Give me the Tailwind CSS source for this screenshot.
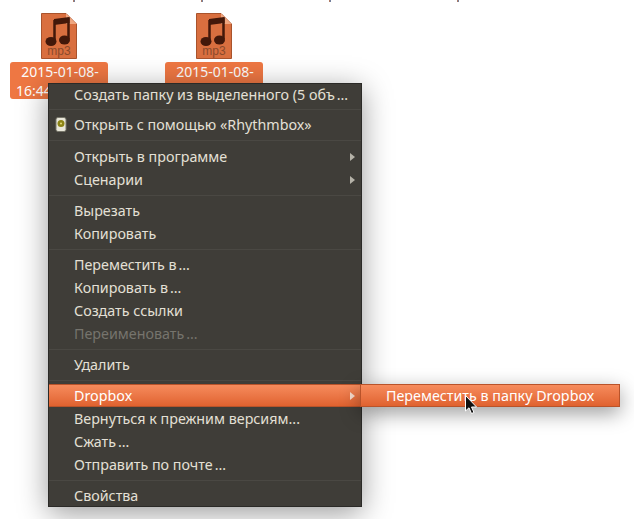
<!DOCTYPE html>
<html lang="en">

<head>
    <meta charset="UTF-8">
    <title>Dropbox menu</title>
    <script src="https://cdn.jsdelivr.net/npm/@tailwindcss/browser@4"></script>
</head>

<body class="font-['Noto_Sans',sans-serif] bg-white overflow-hidden">

    <main class="relative w-[634px] h-[519px] overflow-hidden">

        <!-- bits of the line above the icons -->
        <div class="absolute left-[73px] top-0 w-[2px] h-[2px] bg-gradient-to-r from-[#c9743f] to-[#4f7fb5]"></div>
        <div class="absolute left-[201px] top-0 w-[2px] h-[2px] bg-gradient-to-r from-[#c9743f] to-[#4f7fb5]"></div>
        <div class="absolute left-[329px] top-0 w-[2px] h-[2px] bg-gradient-to-r from-[#c9743f] to-[#4f7fb5]"></div>
        <div class="absolute left-[457px] top-0 w-[2px] h-[2px] bg-gradient-to-r from-[#c9743f] to-[#4f7fb5]"></div>

        <!-- desktop icons -->
        <div class="absolute left-[10px] top-[13px] w-[98px] flex flex-col items-center">
            <svg width="36" height="46" viewBox="0 0 36 46">
                <path d="M.5.5H25L35.500 11V45.500H.5Z" fill="#d96f3f" stroke="#a9532c"/>
                <path d="M25 .5V11H35.500Z" fill="#efa67f"/>
                <path d="M13.500 28V8L27.500 6V26" fill="none" stroke="#43180a" stroke-width="2.500"/>
                <path d="M13 6L28.500 4V10L13 12Z" fill="#43180a"/>
                <ellipse cx="10" cy="28.500" rx="5.500" ry="4.500" fill="#43180a"/>
                <ellipse cx="23.500" cy="27" rx="5.500" ry="4.500" fill="#43180a"/>
                <text x="18" y="42" text-anchor="middle" font-size="12" fill="#8a4a2c" font-family="Liberation Sans">mp3</text>
            </svg>
            <div class="mt-[3px] w-[98px] bg-[#ee7743] rounded-[3px] text-white text-[14px] leading-[19px] text-center h-[37px] pl-[2px]">2015-01-08-<br><span class="block text-left pl-[4px]">16:44</span></div>
        </div>
        <div class="absolute left-[165px] top-[13px] w-[98px] flex flex-col items-center">
            <svg width="36" height="46" viewBox="0 0 36 46">
                <path d="M.5.5H25L35.500 11V45.500H.5Z" fill="#d96f3f" stroke="#a9532c"/>
                <path d="M25 .5V11H35.500Z" fill="#efa67f"/>
                <path d="M13.500 28V8L27.500 6V26" fill="none" stroke="#43180a" stroke-width="2.500"/>
                <path d="M13 6L28.500 4V10L13 12Z" fill="#43180a"/>
                <ellipse cx="10" cy="28.500" rx="5.500" ry="4.500" fill="#43180a"/>
                <ellipse cx="23.500" cy="27" rx="5.500" ry="4.500" fill="#43180a"/>
                <text x="18" y="42" text-anchor="middle" font-size="12" fill="#8a4a2c" font-family="Liberation Sans">mp3</text>
            </svg>
            <div class="mt-[3px] w-[98px] bg-[#ee7743] rounded-[3px] text-white text-[14px] leading-[19px] text-center h-[37px] pl-[2px]">2015-01-08-</div>
        </div>

        <!-- context menu -->
        <div class="absolute left-[48px] top-[83px] w-[314px] h-[424px] bg-[#3f3d38] border border-[#2b2a27] shadow-[0_6px_28px_rgba(0,0,0,0.4)] text-[14.3px] text-[#e4e0d6]">
            <div class="h-[21px] pl-[25px] flex items-center whitespace-nowrap">Создать папку из выделенного (5 объ<span class="ml-[2px]">…</span></div>
            <div class="h-[8px] flex items-center"><div class="w-full h-px bg-[#4a4843]"></div></div>
            <div class="h-[23px] pl-[25px] flex items-center relative">
                <svg class="absolute left-[6px] top-[4px]" width="12" height="15" viewBox="0 0 12 15">
                    <rect x="1" y="0.500" width="10" height="14" rx="2" fill="#e9e7da" stroke="#77766a"/>
                    <circle cx="6" cy="6.500" r="3.500" fill="#8c8416"/>
                    <circle cx="6" cy="6.500" r="1" fill="#e5dc7a"/>
                </svg>
                Открыть с помощью «Rhythmbox»
            </div>
            <div class="h-[9px] flex items-center"><div class="w-full h-px bg-[#4a4843]"></div></div>
            <div class="h-[23px] pl-[25px] flex items-center justify-between pr-[6px]">Открыть в программе<span class="w-0 h-0 border-y-[4px] border-y-transparent border-l-[5px] border-l-[#b5b2a8]"></span></div>
            <div class="h-[23px] pl-[25px] flex items-center justify-between pr-[6px]">Сценарии<span class="w-0 h-0 border-y-[4px] border-y-transparent border-l-[5px] border-l-[#b5b2a8]"></span></div>
            <div class="h-[8px] flex items-center"><div class="w-full h-px bg-[#4a4843]"></div></div>
            <div class="h-[23px] pl-[25px] flex items-center">Вырезать</div>
            <div class="h-[23px] pl-[25px] flex items-center">Копировать</div>
            <div class="h-[8px] flex items-center"><div class="w-full h-px bg-[#4a4843]"></div></div>
            <div class="h-[23px] pl-[25px] flex items-center">Переместить в<span class="ml-[2px]">…</span></div>
            <div class="h-[23px] pl-[25px] flex items-center">Копировать в<span class="ml-[2px]">…</span></div>
            <div class="h-[23px] pl-[25px] flex items-center">Создать ссылки</div>
            <div class="h-[23px] pl-[25px] flex items-center text-[#76746d]">Переименовать<span class="ml-[2px]">…</span></div>
            <div class="h-[8px] flex items-center"><div class="w-full h-px bg-[#4a4843]"></div></div>
            <div class="h-[23px] pl-[25px] flex items-center">Удалить</div>
            <div class="h-[8px] flex items-center"><div class="w-full h-px bg-[#4a4843]"></div></div>
            <div class="h-[23px] pl-[25px] flex items-center justify-between pr-[6px] bg-gradient-to-b from-[#f68b5c] to-[#e0622f] border-y border-[#b9532a] text-white">Dropbox<span class="w-0 h-0 border-y-[4px] border-y-transparent border-l-[5px] border-l-[#f7dccd]"></span></div>
            <div class="h-[23px] pl-[25px] flex items-center">Вернуться к прежним версиям...</div>
            <div class="h-[23px] pl-[25px] flex items-center">Сжать<span class="ml-[2px]">…</span></div>
            <div class="h-[23px] pl-[25px] flex items-center">Отправить по почте<span class="ml-[2px]">…</span></div>
            <div class="h-[9px] flex items-center"><div class="w-full h-px bg-[#4a4843]"></div></div>
            <div class="h-[22px] pl-[25px] flex items-center">Свойства</div>
        </div>

        <!-- submenu -->
        <div class="absolute left-[360px] top-[384px] w-[260px] h-[23px] pl-[25px] flex items-center bg-gradient-to-b from-[#f68b5c] to-[#e0622f] border border-[#b9532a] shadow-[0_6px_20px_rgba(0,0,0,0.4)] text-[14.3px] text-white whitespace-nowrap">Переместить в папку Dropbox</div>

        <!-- mouse pointer -->
        <svg class="absolute left-[465px] top-[395px]" width="13" height="20" viewBox="0 0 13 20">
            <path d="M.5.500V16L4 12.800L6.500 18.500L9 17.500L6.500 12H11.500Z" fill="#111" stroke="#fff"/>
        </svg>
    </main>

</body>

</html>
